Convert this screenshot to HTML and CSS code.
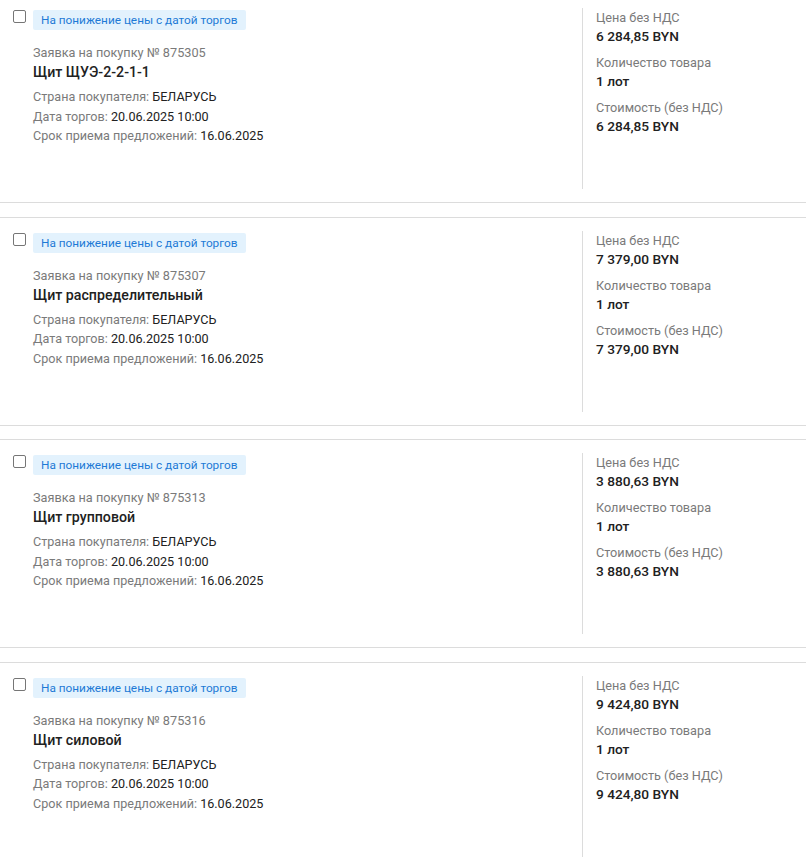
FILE: index.html
```html
<!DOCTYPE html>
<html lang="ru">

<head>
    <meta charset="UTF-8">
    <meta name="viewport" content="width=device-width, initial-scale=1.0">
    <title>Заявки на покупку</title>
    <link rel="stylesheet" href="styles.css">
</head>

<body>
    <div class="lot-list">
        <div class="lot-card">
            <div class="lot-main">
                <div class="lot-head">
                    <span class="check"></span>
                    <span class="badge">На понижение цены с датой торгов</span>
                </div>
                <div class="lot-body">
                    <div class="lot-number">Заявка на покупку № 875305</div>
                    <div class="lot-title">Щит ЩУЭ-2-2-1-1</div>
                    <div class="lot-meta">Страна покупателя: <b>БЕЛАРУСЬ</b></div>
                    <div class="lot-meta">Дата торгов: <b>20.06.2025 10:00</b></div>
                    <div class="lot-meta">Срок приема предложений: <b>16.06.2025</b></div>
                </div>
            </div>
            <div class="lot-side">
                <div class="side-label">Цена без НДС</div>
                <div class="side-value">6 284,85 BYN</div>
                <div class="side-label">Количество товара</div>
                <div class="side-value">1 лот</div>
                <div class="side-label">Стоимость (без НДС)</div>
                <div class="side-value">6 284,85 BYN</div>
            </div>
        </div>

        <div class="lot-card">
            <div class="lot-main">
                <div class="lot-head">
                    <span class="check"></span>
                    <span class="badge">На понижение цены с датой торгов</span>
                </div>
                <div class="lot-body">
                    <div class="lot-number">Заявка на покупку № 875307</div>
                    <div class="lot-title">Щит распределительный</div>
                    <div class="lot-meta">Страна покупателя: <b>БЕЛАРУСЬ</b></div>
                    <div class="lot-meta">Дата торгов: <b>20.06.2025 10:00</b></div>
                    <div class="lot-meta">Срок приема предложений: <b>16.06.2025</b></div>
                </div>
            </div>
            <div class="lot-side">
                <div class="side-label">Цена без НДС</div>
                <div class="side-value">7 379,00 BYN</div>
                <div class="side-label">Количество товара</div>
                <div class="side-value">1 лот</div>
                <div class="side-label">Стоимость (без НДС)</div>
                <div class="side-value">7 379,00 BYN</div>
            </div>
        </div>

        <div class="lot-card">
            <div class="lot-main">
                <div class="lot-head">
                    <span class="check"></span>
                    <span class="badge">На понижение цены с датой торгов</span>
                </div>
                <div class="lot-body">
                    <div class="lot-number">Заявка на покупку № 875313</div>
                    <div class="lot-title">Щит групповой</div>
                    <div class="lot-meta">Страна покупателя: <b>БЕЛАРУСЬ</b></div>
                    <div class="lot-meta">Дата торгов: <b>20.06.2025 10:00</b></div>
                    <div class="lot-meta">Срок приема предложений: <b>16.06.2025</b></div>
                </div>
            </div>
            <div class="lot-side">
                <div class="side-label">Цена без НДС</div>
                <div class="side-value">3 880,63 BYN</div>
                <div class="side-label">Количество товара</div>
                <div class="side-value">1 лот</div>
                <div class="side-label">Стоимость (без НДС)</div>
                <div class="side-value">3 880,63 BYN</div>
            </div>
        </div>

        <div class="lot-card">
            <div class="lot-main">
                <div class="lot-head">
                    <span class="check"></span>
                    <span class="badge">На понижение цены с датой торгов</span>
                </div>
                <div class="lot-body">
                    <div class="lot-number">Заявка на покупку № 875316</div>
                    <div class="lot-title">Щит силовой</div>
                    <div class="lot-meta">Страна покупателя: <b>БЕЛАРУСЬ</b></div>
                    <div class="lot-meta">Дата торгов: <b>20.06.2025 10:00</b></div>
                    <div class="lot-meta">Срок приема предложений: <b>16.06.2025</b></div>
                </div>
            </div>
            <div class="lot-side">
                <div class="side-label">Цена без НДС</div>
                <div class="side-value">9 424,80 BYN</div>
                <div class="side-label">Количество товара</div>
                <div class="side-value">1 лот</div>
                <div class="side-label">Стоимость (без НДС)</div>
                <div class="side-value">9 424,80 BYN</div>
            </div>
        </div>
    </div>
</body>

</html>
```

FILE: styles.css
```css
html,
body {
    margin: 0;
    padding: 0;
    background-color: #fff;
}

body {
    font-family: Roboto, "Noto Sans", Arial, sans-serif;
    color: #212121;
    overflow: hidden;
}

.lot-list {
    margin-top: -6px;
}

.lot-card {
    display: flex;
    border-top: 1px solid #dcdcdc;
    border-bottom: 1px solid #dcdcdc;
    padding: 14px 0 13px;
    margin-bottom: 13.67px;
}

.lot-main {
    flex: 1;
    padding-left: 13px;
    padding-top: 1px;
    min-height: 179px;
}

.lot-head {
    display: flex;
    align-items: flex-start;
    height: 20px;
}

.check {
    box-sizing: border-box;
    width: 13px;
    height: 13px;
    border: 1px solid #767676;
    border-radius: 2px;
    margin-right: 7px;
}

.badge {
    display: inline-block;
    height: 20px;
    line-height: 20px;
    padding: 0 8px;
    font-size: 11.8px;
    color: #1e7ad6;
    background-color: #e3f2fd;
    border-radius: 2px;
}

.lot-body {
    padding-left: 20px;
}

.lot-number {
    margin-top: 13px;
    font-size: 12.7px;
    line-height: 20px;
    color: #7a7a7a;
}

.lot-title {
    font-size: 14.2px;
    font-weight: 500;
    line-height: 19px;
    color: #212121;
    margin-bottom: 5px;
}

.lot-meta {
    font-size: 12.6px;
    line-height: 19.5px;
    color: #7a7a7a;
}

.lot-meta b {
    font-weight: 400;
    color: #212121;
}

.lot-side {
    width: 210px;
    flex-shrink: 0;
    border-left: 1px solid #dcdcdc;
    padding-left: 13px;
    margin-top: -1px;
}

.side-label {
    font-size: 12.7px;
    line-height: 19px;
    color: #7a7a7a;
}

.side-value {
    font-size: 13.7px;
    font-weight: 500;
    line-height: 19px;
    color: #212121;
    margin-bottom: 7px;
}
```
